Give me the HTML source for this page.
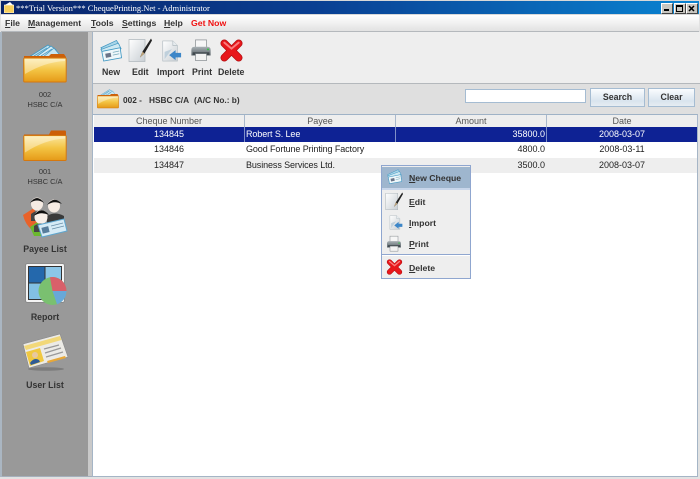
<!DOCTYPE html>
<html><head><meta charset="utf-8"><style>
html,body{margin:0;padding:0}
#a{position:relative;width:700px;height:479px;overflow:hidden;background:#e2e2e2;font-family:"Liberation Sans",sans-serif;font-size:9px;color:#222;filter:blur(.3px)}
#a div,#a svg{position:absolute}
.t{white-space:nowrap;line-height:12px}
.c{text-align:center}
.b{font-weight:bold}
.m{font-weight:bold;font-size:8.7px;color:#333;top:17px}
u{text-decoration:underline}
.h{top:115px;height:12px;background:#eee;color:#555;text-align:center;line-height:12px;font-size:9px;border-right:1px solid #a9b8cc;box-sizing:border-box}
.r{height:15px;line-height:15px;font-size:9px}
.p{letter-spacing:-.1px}
.btn{top:88px;height:17px;border:1px solid #a5bcd2;background:linear-gradient(#fafcfe,#d9e4ee 70%,#e6edf3);font-weight:bold;font-size:8.8px;color:#333;text-align:center;line-height:17px;box-sizing:content-box}
.tl{top:66px;font-weight:bold;font-size:8.8px;color:#333}
.s{font-weight:bold;font-size:8.8px;color:#333;width:86px;left:2px;text-align:center}
.s2{font-size:7.4px;color:#333;width:86px;left:2px;text-align:center}
.pm{left:409px;font-weight:bold;font-size:8.7px;color:#333}
.hb{font-weight:bold;font-size:8.3px;color:#333;top:94px}
</style></head><body><div id="a">
<svg width="0" height="0"><defs>
<linearGradient id="fg" x1="0" y1="0" x2="0" y2="1"><stop offset="0" stop-color="#fbe7a0"/><stop offset=".5" stop-color="#f3c443"/><stop offset="1" stop-color="#e59a18"/></linearGradient>
<linearGradient id="pg" x1="0" y1="0" x2="1" y2="1"><stop offset="0" stop-color="#fff"/><stop offset="1" stop-color="#c9cfd4"/></linearGradient>
<linearGradient id="prg" x1="0" y1="0" x2="0" y2="1"><stop offset="0" stop-color="#a8b0b4"/><stop offset="1" stop-color="#5a6368"/></linearGradient>
<symbol id="fcheque" viewBox="0 0 44 40">
<path d="M6 14 L25 2 L30 6 L14 14Z" fill="#bfe0ee" stroke="#3f97c2" stroke-width=".8"/>
<path d="M13 14 L28 3 L33 7 L22 14Z" fill="#d7edf5" stroke="#3f97c2" stroke-width=".8"/>
<path d="M20 14 L31 5 L36 11 L33 14Z" fill="#c7e4f0" stroke="#3f97c2" stroke-width=".8"/>
<path d="M11 13 L24 5 M18 13 L29 6" stroke="#5aa0c4" stroke-width="1"/>
<path d="M1 13 H26 L28 11 H41 L43 14 V30 H1Z" fill="#cc5f08"/>
<rect x=".7" y="15" width="42.500" height="24" rx="1" fill="url(#fg)" stroke="#d5780f"/>
<path d="M2 16 H42 V18 Q22 19 2 31Z" fill="#fff" opacity=".38"/>
</symbol>
<symbol id="fold" viewBox="0 0 44 32">
<path d="M1 5 H26 L28 1 H42 Q43 1 43 3 V20 H1Z" fill="#cc5f08"/>
<rect x=".7" y="6" width="42.500" height="25" rx="1" fill="url(#fg)" stroke="#d5780f"/>
<path d="M2 7 H42 V9 Q22 10 2 23Z" fill="#fff" opacity=".38"/>
</symbol>
<symbol id="new" viewBox="0 0 24 24">
<path d="M1 9 L18 1 L21 6 L4 14Z" fill="#a9d5e8" stroke="#3f97c2" stroke-width=".8"/>
<path d="M1 11 L20 4 L23 10 L5 18Z" fill="#cde8f2" stroke="#3f97c2" stroke-width=".8"/>
<path d="M2 13 L22 9 L23.500 20 L4 23.500Z" fill="#eef7fa" stroke="#3f97c2" stroke-width=".9"/>
<rect x="6" y="15" width="6" height="4.500" fill="#6a7488" transform="rotate(-11 9 17)"/>
<path d="M14 14 L21 12.500 M14 17 L21 15.500" stroke="#7ab" stroke-width=".8"/>
</symbol>
<symbol id="edit" viewBox="0 0 24 24">
<path d="M1 1 H17 V23 H1Z" fill="url(#pg)" stroke="#b0b8bd" stroke-width=".7"/>
<path d="M23 0 L14.500 13 L12 19 L16.500 15 L24 2Z" fill="#222"/>
<path d="M14.500 13 L12 19 L16.500 15Z" fill="#bfa47a"/>
</symbol>
<symbol id="imp" viewBox="0 0 24 24">
<path d="M3 1 H14 L19 6 V23 H3Z" fill="url(#pg)" stroke="#b0bac0" stroke-width=".7"/>
<path d="M14 1 V6 H19" fill="#e7ecef" stroke="#b0bac0" stroke-width=".7"/>
<path d="M23 14 V19 H17 V22 L10 16.500 L17 11 V14Z" fill="#3c86c8"/>
<path d="M5 21 L13 10 L5 13Z" fill="#bfd0dc"/>
</symbol>
<symbol id="prt" viewBox="0 0 24 24">
<rect x="6" y="1" width="12" height="9" fill="#f6f6f6" stroke="#8a8f93" stroke-width=".8"/>
<path d="M1.500 12 Q1.500 8.500 5 8.500 H19 Q22.500 8.500 22.500 12 V18 H1.500Z" fill="url(#prg)"/>
<rect x="18.500" y="10.500" width="2.200" height="1.700" fill="#38c048"/>
<rect x="3" y="14.500" width="18" height="3" fill="#41494e"/>
<rect x="6" y="16" width="12" height="7.500" fill="#f2f2f2" stroke="#7c8388" stroke-width=".7"/>
</symbol>
<symbol id="del" viewBox="0 0 24 24">
<path d="M4.500 4.500 L19.500 19.500 M19.500 4.500 L4.500 19.500" stroke="#b30d10" stroke-width="8" stroke-linecap="round"/>
<path d="M4.500 4.500 L19.500 19.500 M19.500 4.500 L4.500 19.500" stroke="#e8171b" stroke-width="6.400" stroke-linecap="round"/>
<path d="M4.500 3.800 L12 10 L19.500 3.800" stroke="#fb7d7d" stroke-width="2" fill="none" stroke-linecap="round"/>
</symbol>
</defs></svg>

<!-- title bar -->
<div style="left:0;top:0;width:700px;height:15px;background:#d8d8d8"></div>
<div style="left:1px;top:1px;width:698px;height:13px;background:linear-gradient(90deg,#0a246a,#0a3f92 45%,#0a84d2)"></div>
<svg style="left:4px;top:2px" width="10" height="11" viewBox="0 0 10 11"><path d="M1 3 L6 0 L9 3Z" fill="#fff"/><rect x="0" y="3" width="10" height="8" fill="#f7cf5d" stroke="#fff" stroke-width=".6"/></svg>
<div class="t" style="left:16px;top:2px;color:#fff;font-family:'Liberation Serif',serif;font-size:8.5px">***Trial Version*** ChequePrinting.Net - Administrator</div>
<div style="left:661px;top:3px;width:10px;height:9px;background:#c8c6c0;border:1px solid #fff;border-color:#fff #444 #444 #fff"></div><div style="left:664px;top:9px;width:5px;height:2px;background:#000"></div>
<div style="left:674px;top:3px;width:10px;height:9px;background:#c8c6c0;border:1px solid #fff;border-color:#fff #444 #444 #fff"></div><div style="left:676px;top:5px;width:5px;height:4px;border:1px solid #000;border-top-width:2px"></div>
<div style="left:686px;top:3px;width:10px;height:9px;background:#c8c6c0;border:1px solid #fff;border-color:#fff #444 #444 #fff"></div><svg style="left:688px;top:5px" width="7" height="7"><path d="M1 1 L6 6 M6 1 L1 6" stroke="#000" stroke-width="1.500"/></svg>

<!-- menu -->
<div style="left:1px;top:15px;width:698px;height:16px;background:linear-gradient(#fff,#e2e2e2);border-bottom:1px solid #b4b8bc"></div>
<div class="t m" style="left:5px"><u>F</u>ile</div>
<div class="t m" style="left:28px"><u>M</u>anagement</div>
<div class="t m" style="left:91px"><u>T</u>ools</div>
<div class="t m" style="left:122px"><u>S</u>ettings</div>
<div class="t m" style="left:164px"><u>H</u>elp</div>
<div class="t m" style="left:191px;color:#f01010">Get Now</div>

<!-- left panel -->
<div style="left:2px;top:32px;width:86px;height:444px;background:#999;border-right:4px solid #c9c9c9"></div>
<div style="left:0;top:32px;width:2px;height:445px;background:#aab6c2"></div>
<div style="left:92px;top:32px;width:1px;height:445px;background:#a5b5c6"></div>
<div style="left:2px;top:476px;width:90px;height:1px;background:#a5b0bc"></div>
<svg style="left:23px;top:41px" width="44" height="44"><use href="#fcheque" width="44" height="44"/></svg>
<div class="t s2" style="top:89px">002</div>
<div class="t s2" style="top:99px">HSBC C/A</div>
<svg style="left:23px;top:129px" width="44" height="33"><use href="#fold" width="44" height="33"/></svg>
<div class="t s2" style="top:166px">001</div>
<div class="t s2" style="top:176px">HSBC C/A</div>

<!-- payee -->
<svg style="left:22px;top:194px" width="46" height="44" viewBox="0 0 46 44">
<path d="M1 21 L12 14 L19 34 L10 36 Q3 30 1 21Z" fill="#e8622a"/>
<path d="M8 33 L17 27 L23 42 L12 42Z" fill="#6bb82e"/>
<ellipse cx="15" cy="10" rx="6" ry="6.500" fill="#f5ebe3"/><path d="M8 9 Q15 -1 22 9 Q15 4 8 9Z" fill="#111"/><path d="M9 20 Q16 14 23 20 V27 H9Z" fill="#444"/>
<ellipse cx="32" cy="12" rx="6" ry="6.500" fill="#f5ebe3"/><path d="M25 11 Q32 1 40 10 Q32 6 25 11Z" fill="#111"/><path d="M25 22 Q33 17 42 22 V30 H25Z" fill="#3a3a3a"/>
<ellipse cx="19" cy="23" rx="6.500" ry="7" fill="#f7eee8"/><path d="M11.500 22 Q19 11 27 21 Q19 17 11.500 22Z" fill="#0d0d0d"/><path d="M12 32 Q19 27 27 32 V38 H12Z" fill="#444"/>
<path d="M16 31 L42 25 L45 37 L20 43Z" fill="#d6ebf6" stroke="#5ea6cf"/>
<rect x="20" y="33" width="7" height="6" fill="#577d9c" transform="rotate(-14 23 36)"/>
<path d="M29 32 L41 29 M30 35 L42 32" stroke="#6a90aa" stroke-width=".8"/>
</svg>
<div class="t s" style="top:243px">Payee List</div>

<!-- report -->
<svg style="left:25px;top:263px" width="42" height="43" viewBox="0 0 42 43">
<rect x=".5" y=".5" width="39" height="39" rx="2" fill="#f3f3f3" stroke="#8a8a8a"/>
<rect x="3" y="3" width="34" height="34" fill="#333"/>
<rect x="4" y="4" width="15.500" height="15.500" fill="#2468ac"/><rect x="20.500" y="4" width="15.500" height="15.500" fill="#8cc6e8"/>
<rect x="4" y="20.500" width="15.500" height="15.500" fill="#82c0e4"/><rect x="20.500" y="20.500" width="15.500" height="15.500" fill="#a8d8ee"/>
<circle cx="27.500" cy="28" r="14" fill="#7ac070"/><path d="M27.500 28 L25 14.200 A14 14 0 0 1 41.500 28Z" fill="#d8606a"/><path d="M27.500 28 L41.500 28 A14 14 0 0 1 32 41.300Z" fill="#68a8d8"/>
</svg>
<div class="t s" style="top:311px">Report</div>

<!-- user list -->
<svg style="left:22px;top:333px" width="46" height="40" viewBox="0 0 46 40">
<ellipse cx="24" cy="36" rx="18" ry="1.800" fill="#7c7c7c"/>
<path d="M1 11 L38 1 L46 24 L7 35Z" fill="#ecebe6" stroke="#888" stroke-width=".6"/>
<path d="M2 13 L38 3 L39.500 7 L4 17Z" fill="#f2d878"/>
<path d="M4 19 L18 15 L22 28 L8 33Z" fill="#f0c840"/>
<circle cx="13" cy="22" r="3" fill="#e8c8a0"/><path d="M8 30 Q12 24 17 27 L18 29 L9 32Z" fill="#2f5c96"/>
<path d="M22 16 L37 12 M23 20 L39 15 M24 24 L41 19" stroke="#999" stroke-width="1.300"/>
<path d="M25 28 L43 23 L44 25 L26 30Z" fill="#e8a838"/>
</svg>
<div class="t s" style="top:379px">User List</div>

<!-- toolbar -->
<div style="left:93px;top:32px;width:607px;height:51px;background:#eee;border-bottom:1px solid #b4b8bc"></div>
<svg style="left:100px;top:39px" width="22" height="23"><use href="#new" width="22" height="23"/></svg>
<svg style="left:128px;top:38px" width="24" height="25"><use href="#edit" width="24" height="25"/></svg>
<svg style="left:160px;top:39px" width="22" height="24"><use href="#imp" width="22" height="24"/></svg>
<svg style="left:190px;top:38px" width="22" height="24"><use href="#prt" width="22" height="24"/></svg>
<svg style="left:220px;top:39px" width="23" height="23"><use href="#del" width="23" height="23"/></svg>
<div class="t tl" style="left:102px">New</div>
<div class="t tl" style="left:132px">Edit</div>
<div class="t tl" style="left:157px">Import</div>
<div class="t tl" style="left:192px">Print</div>
<div class="t tl" style="left:218px">Delete</div>

<!-- header -->
<div style="left:93px;top:84px;width:607px;height:30px;background:#dfdfdf"></div>
<svg style="left:97px;top:88px" width="22" height="21"><use href="#fcheque" width="22" height="21"/></svg>
<div class="t hb" style="left:123px">002 -</div>
<div class="t hb" style="left:149px">HSBC C/A</div>
<div class="t hb" style="left:194px">(A/C No.: b)</div>
<div style="left:465px;top:89px;width:119px;height:12px;background:#fff;border:1px solid #a5bcd2"></div>
<div class="btn" style="left:590px;width:53px">Search</div>
<div class="btn" style="left:648px;width:45px">Clear</div>

<!-- table -->
<div style="left:93px;top:114px;width:604px;height:362px;background:#fff;border-top:1px solid #9fb2c6;box-sizing:border-box"></div>
<div style="left:697px;top:114px;width:1px;height:363px;background:#a5b5c6"></div>
<div style="left:93px;top:476px;width:605px;height:1px;background:#a5b5c6"></div>
<div class="h" style="left:94px;width:151px">Cheque Number</div>
<div class="h" style="left:245px;width:151px">Payee</div>
<div class="h" style="left:396px;width:151px">Amount</div>
<div class="h" style="left:547px;width:151px">Date</div>

<div style="left:94px;top:127px;width:603px;height:15px;background:#0e2294"></div>
<div style="left:94px;top:158px;width:603px;height:15px;background:#eee"></div>
<div style="left:244px;top:127px;width:1px;height:15px;background:#8090c8"></div>
<div style="left:395px;top:127px;width:1px;height:15px;background:#8090c8"></div>
<div style="left:546px;top:127px;width:1px;height:15px;background:#8090c8"></div>

<div class="t r c" style="left:94px;top:127px;width:150px;color:#fff">134845</div>
<div class="t r p" style="left:246px;top:127px;color:#fff">Robert S. Lee</div>
<div class="t r" style="left:396px;top:127px;width:149px;text-align:right;color:#fff">35800.0</div>
<div class="t r c" style="left:547px;top:127px;width:150px;color:#fff">2008-03-07</div>

<div class="t r c" style="left:94px;top:142px;width:150px">134846</div>
<div class="t r p" style="left:246px;top:142px">Good Fortune Printing Factory</div>
<div class="t r" style="left:396px;top:142px;width:149px;text-align:right">4800.0</div>
<div class="t r c" style="left:547px;top:142px;width:150px">2008-03-11</div>

<div class="t r c" style="left:94px;top:158px;width:150px">134847</div>
<div class="t r p" style="left:246px;top:158px">Business Services Ltd.</div>
<div class="t r" style="left:396px;top:158px;width:149px;text-align:right">3500.0</div>
<div class="t r c" style="left:547px;top:158px;width:150px">2008-03-07</div>

<!-- popup -->
<div style="left:381px;top:165px;width:88px;height:112px;background:#eee;border:1px solid #8fa6cf"></div>
<div style="left:382px;top:167px;width:88px;height:21px;background:#9eb6ce"></div>
<div style="left:382px;top:188px;width:88px;height:2px;background:#c8d6ea"></div>
<div style="left:382px;top:254px;width:88px;height:1px;background:#8fa6cf"></div>
<div style="left:382px;top:255px;width:88px;height:1px;background:#fff"></div>
<svg style="left:387px;top:169px" width="15" height="15"><use href="#new" width="15" height="15"/></svg>
<svg style="left:385px;top:192px" width="18" height="19"><use href="#edit" width="18" height="19"/></svg>
<svg style="left:388px;top:214px" width="15" height="17"><use href="#imp" width="15" height="17"/></svg>
<svg style="left:386px;top:235px" width="16" height="17"><use href="#prt" width="16" height="17"/></svg>
<svg style="left:386px;top:259px" width="17" height="16"><use href="#del" width="17" height="16"/></svg>
<div class="t pm" style="top:172px"><u>N</u>ew Cheque</div>
<div class="t pm" style="top:196px"><u>E</u>dit</div>
<div class="t pm" style="top:217px"><u>I</u>mport</div>
<div class="t pm" style="top:238px"><u>P</u>rint</div>
<div class="t pm" style="top:262px"><u>D</u>elete</div>
</div></body></html>
